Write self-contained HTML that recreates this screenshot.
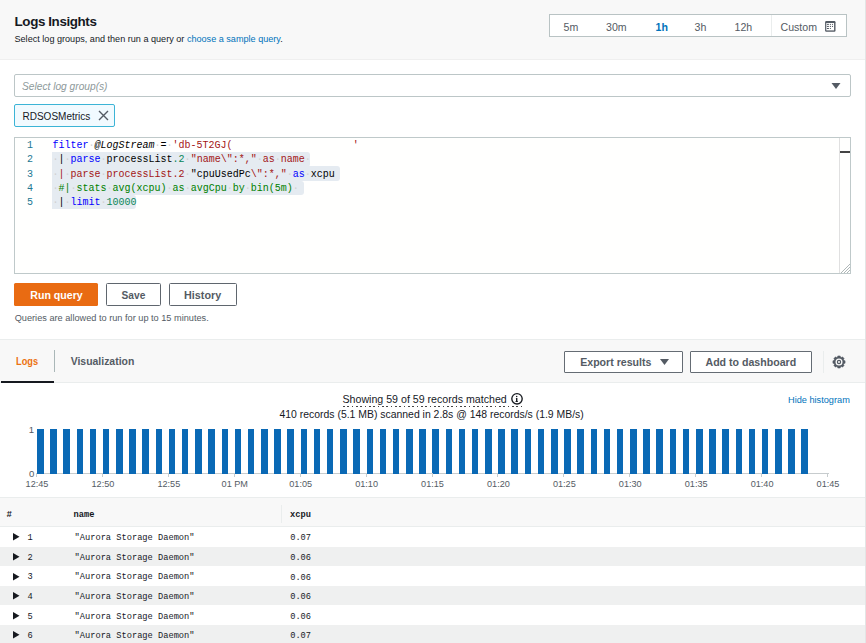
<!DOCTYPE html>
<html><head><meta charset="utf-8">
<style>
*{box-sizing:border-box;margin:0;padding:0}
html,body{width:866px;height:643px;overflow:hidden;background:#fff}
body{position:relative;font-family:"Liberation Sans",sans-serif;color:#16191f}
.a{position:absolute;white-space:pre;line-height:1}
.m{font-family:"Liberation Mono",monospace}
.b{font-weight:bold}
</style></head><body>

<!-- header -->
<div class="a" style="left:0;top:0;width:866px;height:60px;background:#f8f8f8;border-bottom:1px solid #efefef"></div>
<div class="a b" style="left:14.6px;top:14.8px;font-size:13.4px;letter-spacing:-0.4px">Logs Insights</div>
<div class="a" style="left:14.5px;top:34.8px;font-size:9.1px">Select log groups, and then run a query or <span style="color:#0073bb">choose a sample query</span>.</div>

<!-- time range -->
<div class="a" style="left:549px;top:14px;width:298px;height:23px;border:1px solid #b9c3c4;background:#fff"></div>
<div class="a" style="left:771px;top:15px;width:1px;height:21px;background:#eaeded"></div>
<div class="a" style="left:563.5px;top:21.5px;font-size:10.6px;color:#545b64">5m</div>
<div class="a" style="left:606.0px;top:21.5px;font-size:10.6px;color:#545b64">30m</div>
<div class="a b" style="left:655.5px;top:21.5px;font-size:10.6px;color:#0073bb">1h</div>
<div class="a" style="left:694.5px;top:21.5px;font-size:10.6px;color:#545b64">3h</div>
<div class="a" style="left:734.5px;top:21.5px;font-size:10.6px;color:#545b64">12h</div>
<div class="a" style="left:780.5px;top:21.5px;font-size:10.6px;color:#545b64">Custom</div>
<svg class="a" style="left:825px;top:21px" width="11" height="11" viewBox="0 0 11 11"><rect x="0.1" y="0.1" width="10.4" height="10.7" rx="1.2" fill="#545b64"/><rect x="1.3" y="2" width="7.8" height="7.4" fill="#fff"/><g fill="#545b64"><rect x="1.9" y="2.85" width="2" height="1"/><rect x="1.9" y="4.93" width="2" height="1"/><rect x="1.9" y="7" width="2" height="1"/><circle cx="5.4" cy="3.35" r="0.6"/><circle cx="7.5" cy="3.35" r="0.6"/><circle cx="5.4" cy="5.43" r="0.6"/><circle cx="7.5" cy="5.43" r="0.6"/><circle cx="5.4" cy="7.5" r="0.6"/></g></svg>

<!-- right border line -->

<!-- log group select -->
<div class="a" style="left:14px;top:74px;width:837px;height:23px;border:1px solid #bcc6c7;border-radius:2px;background:#fff"></div>
<div class="a" style="left:22px;top:82px;font-size:10.2px;font-style:italic;color:#8d999a">Select log group(s)</div>
<svg class="a" style="left:831px;top:82px" width="10" height="8" viewBox="0 0 10 8"><path d="M0.5 1 L9.5 1 L5 7 Z" fill="#545b64"/></svg>

<!-- token -->
<div class="a" style="left:14px;top:104px;width:101px;height:23px;border:1px solid #3cb4d6;background:#f1faff;border-radius:2px"></div>
<div class="a" style="left:22.5px;top:111.9px;font-size:10px">RDSOSMetrics</div>
<svg class="a" style="left:98px;top:110.4px" width="11" height="11" viewBox="0 0 11 11"><path d="M1 1 L10 10 M10 1 L1 10" stroke="#545b64" stroke-width="1.4"/></svg>

<!-- editor -->
<div class="a" style="left:14px;top:137px;width:837px;height:137px;border:1px solid #bfc9ca;background:#fffffe"></div>
<svg class="a" style="left:840px;top:263px" width="10" height="10" viewBox="0 0 10 10"><path d="M1 10 L10 1 M4 10 L10 4 M7 10 L10 7" stroke="#9aa5a6" stroke-width="0.8"/></svg>

<div class="a m" style="left:27px;top:141.00px;font-size:10px;color:#237893">1</div>
<div class="a m" style="left:27px;top:155.30px;font-size:10px;color:#237893">2</div>
<div class="a m" style="left:27px;top:169.60px;font-size:10px;color:#237893">3</div>
<div class="a m" style="left:27px;top:183.90px;font-size:10px;color:#237893">4</div>
<div class="a m" style="left:27px;top:198.20px;font-size:10px;color:#237893">5</div>
<div class="a" style="left:52px;top:152.00px;width:258px;height:14.60px;background:#e5ebf1;border-radius:0 3px 3px 0"></div>
<div class="a" style="left:52px;top:166.30px;width:288px;height:14.60px;background:#e5ebf1;border-radius:0 3px 3px 0"></div>
<div class="a" style="left:52px;top:180.60px;width:252px;height:14.60px;background:#e5ebf1;border-radius:0 3px 3px 0"></div>
<div class="a" style="left:52px;top:194.90px;width:84px;height:14.60px;background:#e5ebf1;border-radius:0 3px 3px 0"></div>
<div class="a m" style="left:52.5px;top:141.30px;font-size:10px"><span style="color:#0000ff">filter</span><span style="color:#d0d0d0">·</span><span style="color:#000;font-style:italic">@LogStream</span><span style="color:#d0d0d0">·</span><span style="color:#000">=</span><span style="color:#d0d0d0">·</span><span style="color:#a31515">&#x27;db-5T2GJ(</span><span style="color:#000">                    </span><span style="color:#a31515">&#x27;</span></div>
<div class="a m" style="left:52.5px;top:155.20px;font-size:10px"><span style="color:#d0d0d0">·</span><span style="color:#000">|</span><span style="color:#d0d0d0">·</span><span style="color:#0000ff">parse</span><span style="color:#d0d0d0">·</span><span style="color:#000">processList</span><span style="color:#098658">.2</span><span style="color:#d0d0d0">·</span><span style="color:#a31515">&quot;name\&quot;:*,&quot;</span><span style="color:#d0d0d0">·</span><span style="color:#a31515">as</span><span style="color:#d0d0d0">·</span><span style="color:#a31515">name</span><span style="color:#d0d0d0">·</span></div>
<div class="a m" style="left:52.5px;top:169.50px;font-size:10px"><span style="color:#d0d0d0">·</span><span style="color:#a31515">|</span><span style="color:#d0d0d0">·</span><span style="color:#a31515">parse</span><span style="color:#d0d0d0">·</span><span style="color:#a31515">processList</span><span style="color:#a31515">.2</span><span style="color:#d0d0d0">·</span><span style="color:#000">&quot;cpuUsedPc</span><span style="color:#a31515">\&quot;:*,&quot;</span><span style="color:#d0d0d0">·</span><span style="color:#0000ff">as</span><span style="color:#d0d0d0">·</span><span style="color:#000">xcpu</span></div>
<div class="a m" style="left:52.5px;top:183.80px;font-size:10px"><span style="color:#d0d0d0">·</span><span style="color:#008000">#|</span><span style="color:#d0d0d0">·</span><span style="color:#008000">stats</span><span style="color:#d0d0d0">·</span><span style="color:#008000">avg(xcpu)</span><span style="color:#d0d0d0">·</span><span style="color:#008000">as</span><span style="color:#d0d0d0">·</span><span style="color:#008000">avgCpu</span><span style="color:#d0d0d0">·</span><span style="color:#008000">by</span><span style="color:#d0d0d0">·</span><span style="color:#008000">bin(5m)</span><span style="color:#d0d0d0">·</span></div>
<div class="a m" style="left:52.5px;top:198.10px;font-size:10px"><span style="color:#d0d0d0">·</span><span style="color:#000">|</span><span style="color:#d0d0d0">·</span><span style="color:#0000ff">limit</span><span style="color:#d0d0d0">·</span><span style="color:#098658">10000</span></div>
<div class="a" style="left:839px;top:138px;width:1px;height:135px;background:#e0e0e0"></div>
<div class="a" style="left:840px;top:151px;width:10px;height:2px;background:#444"></div>
<!-- buttons -->
<div class="a" style="left:14px;top:283px;width:84px;height:23px;background:#e96b12;border-radius:1.5px"></div>
<div class="a b" style="left:30.3px;top:290px;font-size:10.6px;color:#fff">Run query</div>
<div class="a" style="left:106px;top:283px;width:55px;height:23px;border:1px solid #5f666e;border-radius:1.5px"></div>
<div class="a b" style="left:121.5px;top:291px;font-size:10.2px;color:#545b64">Save</div>
<div class="a" style="left:169px;top:283px;width:68px;height:23px;border:1px solid #5f666e;border-radius:1.5px"></div>
<div class="a b" style="left:184px;top:289.5px;font-size:10.8px;color:#545b64">History</div>
<div class="a" style="left:14.7px;top:314.4px;font-size:9.2px;color:#545b64">Queries are allowed to run for up to 15 minutes.</div>

<!-- tabs band -->
<div class="a" style="left:0;top:339px;width:865px;height:44px;background:#f8f8f8;border-top:1px solid #eaeded;border-bottom:1px solid #eaeded"></div>
<div class="a" style="left:1px;top:381px;width:53px;height:2px;background:#16191f"></div>
<div class="a" style="left:54px;top:350px;width:1px;height:22px;background:#aab7b8"></div>
<div class="a b" style="left:15.8px;top:356.1px;font-size:10.6px;color:#ec7211;transform:scaleX(.87);transform-origin:0 0">Logs</div>
<div class="a b" style="left:70.7px;top:357.1px;font-size:10.45px;color:#545b64">Visualization</div>

<div class="a" style="left:564px;top:351px;width:119px;height:22px;border:1px solid #656c74;background:#fff;border-radius:1px"></div>
<div class="a b" style="left:580.2px;top:357px;font-size:10.6px;color:#545b64">Export results</div>
<svg class="a" style="left:660px;top:359px" width="9" height="6" viewBox="0 0 9 6"><path d="M0 0 L9 0 L4.5 6 Z" fill="#545b64"/></svg>
<div class="a" style="left:690px;top:351px;width:122px;height:22px;border:1px solid #656c74;background:#fff;border-radius:1px"></div>
<div class="a b" style="left:705.5px;top:357px;font-size:10.6px;color:#545b64">Add to dashboard</div>
<div class="a" style="left:823px;top:351px;width:1px;height:22px;background:#eaeded"></div>
<svg class="a" style="left:832.2px;top:354.9px" width="14" height="14" viewBox="0 0 14 14"><path d="M11.99 5.55 L13.09 5.84 L13.09 8.16 L11.99 8.45 L11.56 9.51 L12.13 10.48 L10.48 12.13 L9.51 11.56 L8.45 11.99 L8.16 13.09 L5.84 13.09 L5.55 11.99 L4.49 11.56 L3.52 12.13 L1.87 10.48 L2.44 9.51 L2.01 8.45 L0.91 8.16 L0.91 5.84 L2.01 5.55 L2.44 4.49 L1.87 3.52 L3.52 1.87 L4.49 2.44 L5.55 2.01 L5.84 0.91 L8.16 0.91 L8.45 2.01 L9.51 2.44 L10.48 1.87 L12.13 3.52 L11.56 4.49 Z" fill="#545b64" stroke="#545b64" stroke-width="0.5" stroke-linejoin="round"/><circle cx="7" cy="7" r="3.5" fill="#fafafa"/><circle cx="7" cy="7" r="1.6" fill="none" stroke="#545b64" stroke-width="1.2"/></svg>

<!-- histogram texts -->
<div class="a" style="left:342.5px;top:393.5px;font-size:10.64px">Showing 59 of 59 records matched</div>
<div class="a" style="left:342.5px;top:406px;width:181px;height:1px;background:repeating-linear-gradient(90deg,#444 0,#444 1.8px,transparent 1.8px,transparent 4.33px)"></div>
<svg class="a" style="left:510px;top:392px" width="14" height="14" viewBox="0 0 14 14"><circle cx="7" cy="6.8" r="5.2" fill="none" stroke="#16191f" stroke-width="1.35"/><circle cx="6.7" cy="4.4" r="0.75" fill="#16191f"/><path d="M5.9 6 L7.4 6 L7.4 9.2 L8 9.2 L8 9.9 L5.4 9.9 L5.4 9.2 L6 9.2 L6 6.7 L5.9 6.7 Z" fill="#16191f"/></svg>
<div class="a" style="left:279.5px;top:409.5px;font-size:10.43px">410 records (5.1 MB) scanned in 2.8s @ 148 records/s (1.9 MB/s)</div>
<div class="a" style="left:788px;top:395.7px;font-size:9.2px;color:#0073bb">Hide histogram</div>

<!-- chart -->
<div class="a" style="left:36.5px;top:473px;width:792px;height:1px;background:#c7ccce"></div>
<div class="a" style="left:37.00px;top:429.2px;width:6.5px;height:45.1px;background:#0a69b5"></div>
<div class="a" style="left:50.18px;top:429.2px;width:6.5px;height:45.1px;background:#0a69b5"></div>
<div class="a" style="left:63.36px;top:429.2px;width:6.5px;height:45.1px;background:#0a69b5"></div>
<div class="a" style="left:76.54px;top:429.2px;width:6.5px;height:45.1px;background:#0a69b5"></div>
<div class="a" style="left:89.72px;top:429.2px;width:6.5px;height:45.1px;background:#0a69b5"></div>
<div class="a" style="left:102.90px;top:429.2px;width:6.5px;height:45.1px;background:#0a69b5"></div>
<div class="a" style="left:116.08px;top:429.2px;width:6.5px;height:45.1px;background:#0a69b5"></div>
<div class="a" style="left:129.26px;top:429.2px;width:6.5px;height:45.1px;background:#0a69b5"></div>
<div class="a" style="left:142.44px;top:429.2px;width:6.5px;height:45.1px;background:#0a69b5"></div>
<div class="a" style="left:155.62px;top:429.2px;width:6.5px;height:45.1px;background:#0a69b5"></div>
<div class="a" style="left:168.80px;top:429.2px;width:6.5px;height:45.1px;background:#0a69b5"></div>
<div class="a" style="left:181.98px;top:429.2px;width:6.5px;height:45.1px;background:#0a69b5"></div>
<div class="a" style="left:195.16px;top:429.2px;width:6.5px;height:45.1px;background:#0a69b5"></div>
<div class="a" style="left:208.34px;top:429.2px;width:6.5px;height:45.1px;background:#0a69b5"></div>
<div class="a" style="left:221.52px;top:429.2px;width:6.5px;height:45.1px;background:#0a69b5"></div>
<div class="a" style="left:234.70px;top:429.2px;width:6.5px;height:45.1px;background:#0a69b5"></div>
<div class="a" style="left:247.88px;top:429.2px;width:6.5px;height:45.1px;background:#0a69b5"></div>
<div class="a" style="left:261.06px;top:429.2px;width:6.5px;height:45.1px;background:#0a69b5"></div>
<div class="a" style="left:274.24px;top:429.2px;width:6.5px;height:45.1px;background:#0a69b5"></div>
<div class="a" style="left:287.42px;top:429.2px;width:6.5px;height:45.1px;background:#0a69b5"></div>
<div class="a" style="left:300.60px;top:429.2px;width:6.5px;height:45.1px;background:#0a69b5"></div>
<div class="a" style="left:313.78px;top:429.2px;width:6.5px;height:45.1px;background:#0a69b5"></div>
<div class="a" style="left:326.96px;top:429.2px;width:6.5px;height:45.1px;background:#0a69b5"></div>
<div class="a" style="left:340.14px;top:429.2px;width:6.5px;height:45.1px;background:#0a69b5"></div>
<div class="a" style="left:353.32px;top:429.2px;width:6.5px;height:45.1px;background:#0a69b5"></div>
<div class="a" style="left:366.50px;top:429.2px;width:6.5px;height:45.1px;background:#0a69b5"></div>
<div class="a" style="left:379.68px;top:429.2px;width:6.5px;height:45.1px;background:#0a69b5"></div>
<div class="a" style="left:392.86px;top:429.2px;width:6.5px;height:45.1px;background:#0a69b5"></div>
<div class="a" style="left:406.04px;top:429.2px;width:6.5px;height:45.1px;background:#0a69b5"></div>
<div class="a" style="left:419.22px;top:429.2px;width:6.5px;height:45.1px;background:#0a69b5"></div>
<div class="a" style="left:432.40px;top:429.2px;width:6.5px;height:45.1px;background:#0a69b5"></div>
<div class="a" style="left:445.58px;top:429.2px;width:6.5px;height:45.1px;background:#0a69b5"></div>
<div class="a" style="left:458.76px;top:429.2px;width:6.5px;height:45.1px;background:#0a69b5"></div>
<div class="a" style="left:471.94px;top:429.2px;width:6.5px;height:45.1px;background:#0a69b5"></div>
<div class="a" style="left:485.12px;top:429.2px;width:6.5px;height:45.1px;background:#0a69b5"></div>
<div class="a" style="left:498.30px;top:429.2px;width:6.5px;height:45.1px;background:#0a69b5"></div>
<div class="a" style="left:511.48px;top:429.2px;width:6.5px;height:45.1px;background:#0a69b5"></div>
<div class="a" style="left:524.66px;top:429.2px;width:6.5px;height:45.1px;background:#0a69b5"></div>
<div class="a" style="left:537.84px;top:429.2px;width:6.5px;height:45.1px;background:#0a69b5"></div>
<div class="a" style="left:551.02px;top:429.2px;width:6.5px;height:45.1px;background:#0a69b5"></div>
<div class="a" style="left:564.20px;top:429.2px;width:6.5px;height:45.1px;background:#0a69b5"></div>
<div class="a" style="left:577.38px;top:429.2px;width:6.5px;height:45.1px;background:#0a69b5"></div>
<div class="a" style="left:590.56px;top:429.2px;width:6.5px;height:45.1px;background:#0a69b5"></div>
<div class="a" style="left:603.74px;top:429.2px;width:6.5px;height:45.1px;background:#0a69b5"></div>
<div class="a" style="left:616.92px;top:429.2px;width:6.5px;height:45.1px;background:#0a69b5"></div>
<div class="a" style="left:630.10px;top:429.2px;width:6.5px;height:45.1px;background:#0a69b5"></div>
<div class="a" style="left:643.28px;top:429.2px;width:6.5px;height:45.1px;background:#0a69b5"></div>
<div class="a" style="left:656.46px;top:429.2px;width:6.5px;height:45.1px;background:#0a69b5"></div>
<div class="a" style="left:669.64px;top:429.2px;width:6.5px;height:45.1px;background:#0a69b5"></div>
<div class="a" style="left:682.82px;top:429.2px;width:6.5px;height:45.1px;background:#0a69b5"></div>
<div class="a" style="left:696.00px;top:429.2px;width:6.5px;height:45.1px;background:#0a69b5"></div>
<div class="a" style="left:709.18px;top:429.2px;width:6.5px;height:45.1px;background:#0a69b5"></div>
<div class="a" style="left:722.36px;top:429.2px;width:6.5px;height:45.1px;background:#0a69b5"></div>
<div class="a" style="left:735.54px;top:429.2px;width:6.5px;height:45.1px;background:#0a69b5"></div>
<div class="a" style="left:748.72px;top:429.2px;width:6.5px;height:45.1px;background:#0a69b5"></div>
<div class="a" style="left:761.90px;top:429.2px;width:6.5px;height:45.1px;background:#0a69b5"></div>
<div class="a" style="left:775.08px;top:429.2px;width:6.5px;height:45.1px;background:#0a69b5"></div>
<div class="a" style="left:788.26px;top:429.2px;width:6.5px;height:45.1px;background:#0a69b5"></div>
<div class="a" style="left:801.44px;top:429.2px;width:6.5px;height:45.1px;background:#0a69b5"></div>
<div class="a" style="left:36.00px;top:473px;width:1px;height:4px;background:#c7ccce"></div>
<div class="a" style="left:-3.00px;top:479.5px;width:80px;text-align:center;font-size:9.15px;color:#545b64">12:45</div>
<div class="a" style="left:101.92px;top:473px;width:1px;height:4px;background:#c7ccce"></div>
<div class="a" style="left:62.92px;top:479.5px;width:80px;text-align:center;font-size:9.15px;color:#545b64">12:50</div>
<div class="a" style="left:167.84px;top:473px;width:1px;height:4px;background:#c7ccce"></div>
<div class="a" style="left:128.84px;top:479.5px;width:80px;text-align:center;font-size:9.15px;color:#545b64">12:55</div>
<div class="a" style="left:233.76px;top:473px;width:1px;height:4px;background:#c7ccce"></div>
<div class="a" style="left:194.76px;top:479.5px;width:80px;text-align:center;font-size:9.15px;color:#545b64">01 PM</div>
<div class="a" style="left:299.68px;top:473px;width:1px;height:4px;background:#c7ccce"></div>
<div class="a" style="left:260.68px;top:479.5px;width:80px;text-align:center;font-size:9.15px;color:#545b64">01:05</div>
<div class="a" style="left:365.60px;top:473px;width:1px;height:4px;background:#c7ccce"></div>
<div class="a" style="left:326.60px;top:479.5px;width:80px;text-align:center;font-size:9.15px;color:#545b64">01:10</div>
<div class="a" style="left:431.52px;top:473px;width:1px;height:4px;background:#c7ccce"></div>
<div class="a" style="left:392.52px;top:479.5px;width:80px;text-align:center;font-size:9.15px;color:#545b64">01:15</div>
<div class="a" style="left:497.44px;top:473px;width:1px;height:4px;background:#c7ccce"></div>
<div class="a" style="left:458.44px;top:479.5px;width:80px;text-align:center;font-size:9.15px;color:#545b64">01:20</div>
<div class="a" style="left:563.36px;top:473px;width:1px;height:4px;background:#c7ccce"></div>
<div class="a" style="left:524.36px;top:479.5px;width:80px;text-align:center;font-size:9.15px;color:#545b64">01:25</div>
<div class="a" style="left:629.28px;top:473px;width:1px;height:4px;background:#c7ccce"></div>
<div class="a" style="left:590.28px;top:479.5px;width:80px;text-align:center;font-size:9.15px;color:#545b64">01:30</div>
<div class="a" style="left:695.20px;top:473px;width:1px;height:4px;background:#c7ccce"></div>
<div class="a" style="left:656.20px;top:479.5px;width:80px;text-align:center;font-size:9.15px;color:#545b64">01:35</div>
<div class="a" style="left:761.12px;top:473px;width:1px;height:4px;background:#c7ccce"></div>
<div class="a" style="left:722.12px;top:479.5px;width:80px;text-align:center;font-size:9.15px;color:#545b64">01:40</div>
<div class="a" style="left:827.04px;top:473px;width:1px;height:4px;background:#c7ccce"></div>
<div class="a" style="left:788.04px;top:479.5px;width:80px;text-align:center;font-size:9.15px;color:#545b64">01:45</div>
<div class="a" style="left:20px;top:424.6px;width:14px;text-align:right;font-size:9.6px;color:#545b64">1</div>
<div class="a" style="left:20.3px;top:469.4px;width:14px;text-align:right;font-size:9.6px;color:#545b64">0</div>

<!-- table -->
<div class="a" style="left:0;top:497px;width:865px;height:30px;background:#f8f8f8;border-top:1px solid #eaeded;border-bottom:1px solid #eaeded"></div>
<div class="a" style="left:281px;top:505px;width:1px;height:18px;background:#eaeded"></div>
<div class="a m b" style="left:6.6px;top:510.6px;font-size:9px">#</div>
<div class="a m b" style="left:73.6px;top:511.2px;font-size:8.7px">name</div>
<div class="a m b" style="left:290px;top:511.1px;font-size:8.7px">xcpu</div>
<div class="a" style="left:0;top:527.0px;width:865px;height:19.8px;background:#fff"></div>
<svg class="a" style="left:13px;top:533.3px" width="7" height="8" viewBox="0 0 7 8"><path d="M0 0 L6.5 3.8 L0 7.6 Z" fill="#16191f"/></svg>
<div class="a m" style="left:27.5px;top:534.2px;font-size:8.7px">1</div>
<div class="a m" style="left:74.6px;top:534.2px;font-size:8.7px">"Aurora Storage Daemon"</div>
<div class="a m" style="left:290.2px;top:534.3px;font-size:8.7px">0.07</div>
<div class="a" style="left:0;top:546.6px;width:865px;height:19.8px;background:#eff0f0"></div>
<svg class="a" style="left:13px;top:552.9px" width="7" height="8" viewBox="0 0 7 8"><path d="M0 0 L6.5 3.8 L0 7.6 Z" fill="#16191f"/></svg>
<div class="a m" style="left:27.5px;top:553.8px;font-size:8.7px">2</div>
<div class="a m" style="left:74.6px;top:553.8px;font-size:8.7px">"Aurora Storage Daemon"</div>
<div class="a m" style="left:290.2px;top:553.9px;font-size:8.7px">0.06</div>
<div class="a" style="left:0;top:566.2px;width:865px;height:19.8px;background:#fff"></div>
<svg class="a" style="left:13px;top:572.5px" width="7" height="8" viewBox="0 0 7 8"><path d="M0 0 L6.5 3.8 L0 7.6 Z" fill="#16191f"/></svg>
<div class="a m" style="left:27.5px;top:573.4px;font-size:8.7px">3</div>
<div class="a m" style="left:74.6px;top:573.4px;font-size:8.7px">"Aurora Storage Daemon"</div>
<div class="a m" style="left:290.2px;top:573.5px;font-size:8.7px">0.06</div>
<div class="a" style="left:0;top:585.8px;width:865px;height:19.8px;background:#eff0f0"></div>
<svg class="a" style="left:13px;top:592.1px" width="7" height="8" viewBox="0 0 7 8"><path d="M0 0 L6.5 3.8 L0 7.6 Z" fill="#16191f"/></svg>
<div class="a m" style="left:27.5px;top:593.0px;font-size:8.7px">4</div>
<div class="a m" style="left:74.6px;top:593.0px;font-size:8.7px">"Aurora Storage Daemon"</div>
<div class="a m" style="left:290.2px;top:593.1px;font-size:8.7px">0.06</div>
<div class="a" style="left:0;top:605.4px;width:865px;height:19.8px;background:#fff"></div>
<svg class="a" style="left:13px;top:611.7px" width="7" height="8" viewBox="0 0 7 8"><path d="M0 0 L6.5 3.8 L0 7.6 Z" fill="#16191f"/></svg>
<div class="a m" style="left:27.5px;top:612.6px;font-size:8.7px">5</div>
<div class="a m" style="left:74.6px;top:612.6px;font-size:8.7px">"Aurora Storage Daemon"</div>
<div class="a m" style="left:290.2px;top:612.7px;font-size:8.7px">0.06</div>
<div class="a" style="left:0;top:625.0px;width:865px;height:19.8px;background:#eff0f0"></div>
<svg class="a" style="left:13px;top:631.3px" width="7" height="8" viewBox="0 0 7 8"><path d="M0 0 L6.5 3.8 L0 7.6 Z" fill="#16191f"/></svg>
<div class="a m" style="left:27.5px;top:632.2px;font-size:8.7px">6</div>
<div class="a m" style="left:74.6px;top:632.2px;font-size:8.7px">"Aurora Storage Daemon"</div>
<div class="a m" style="left:290.2px;top:632.3px;font-size:8.7px">0.07</div>

<div class="a" style="left:865px;top:0;width:1px;height:643px;background:#e3e5e5"></div>
</body></html>
